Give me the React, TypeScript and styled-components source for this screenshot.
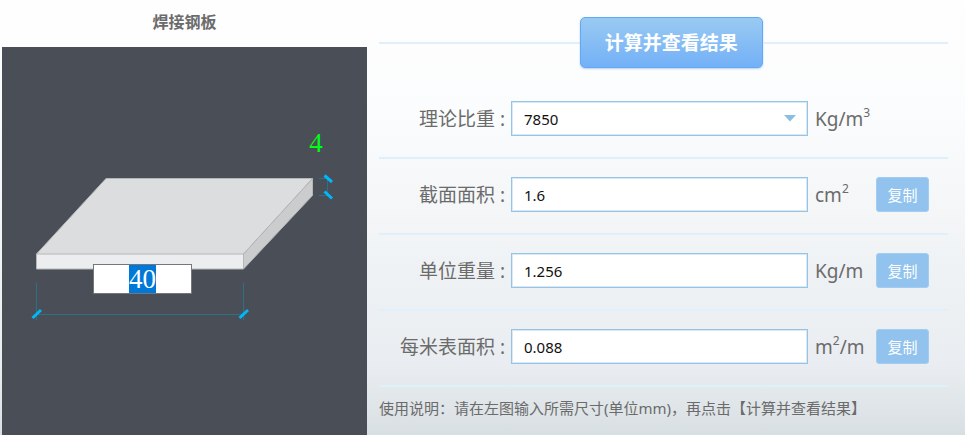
import React, { useEffect, useRef, useState } from "react";
import styled, { createGlobalStyle } from "styled-components";

const GlobalStyle = createGlobalStyle`
  *, *::before, *::after { box-sizing: border-box; }
  body {
    margin: 0;
    color: #6b6b6b;
    font-family: "Noto Sans", "Noto Sans CJK SC", sans-serif;
  }
  button, input, select { font: inherit; margin: 0; }
`;

const Page = styled.main`
  display: grid;
  grid-template-columns: minmax(0, 365fr) minmax(0, 569fr);
  column-gap: 12px;
  min-height: 100vh;
  padding: 0 17px 0 2px;
  background: linear-gradient(
    #fefefe 0%,
    #fbfcfd 25%,
    #f4f6f8 48%,
    #eff2f4 62%,
    #e9edf1 84%,
    #e3e8eb 90%,
    #d8dfe2 100%
  );
`;

const Preview = styled.section`
  display: flex;
  flex-direction: column;
`;

const Title = styled.h1`
  margin: 0;
  padding: 10px 0 13px;
  font-size: 16px;
  line-height: 24px;
  font-weight: 600;
  text-align: center;
`;

const Stage = styled.div`
  flex: 1;
  background: #4a4e57;
`;

const Drawing = styled.div`
  position: relative;

  svg {
    display: block;
    width: 100%;
    height: auto;
  }
`;

const DimensionInput = styled.input`
  position: absolute;
  padding: 0;
  border: 1px solid transparent;
  background: transparent;
  color: #00ff12;
  font-family: "Liberation Serif", "Noto Sans CJK SC", serif;
  font-size: 27px;
  line-height: 27px;
  text-align: center;
  outline: none;

  &:focus {
    background: #fff;
    border-color: #73767d;
    color: #222;
  }

  &::selection {
    background: #0078d7;
    color: #fff;
  }
`;

const WidthInput = styled(DimensionInput)`
  left: 25%;
  top: 56%;
  width: 27%;
  height: 30px;
`;

const ThicknessInput = styled(DimensionInput)`
  left: 82%;
  top: 21%;
  width: 8%;
  height: 30px;
`;

const Form = styled.form`
  display: flex;
  flex-direction: column;
`;

const Actions = styled.div`
  display: flex;
  align-items: center;
  padding: 17px 0 15px;

  &::before,
  &::after {
    content: "";
    height: 2px;
    background: #e0f0fb;
  }
  &::before { flex: 13; }
  &::after { flex: 12; }
`;

const CalculateButton = styled.button`
  height: 51px;
  padding: 0 24px;
  border: 1px solid #5fa9f7;
  border-radius: 5px;
  background: linear-gradient(#99caf2, #73b0f7);
  box-shadow: 0 1px 2px rgba(80, 140, 200, 0.4);
  color: #fff;
  font-size: 19px;
  line-height: 24px;
  font-weight: 700;
  white-space: nowrap;
  cursor: pointer;
`;

const Row = styled.div`
  display: grid;
  grid-template-columns: 126px minmax(0, 1fr) 56px 53px;
  column-gap: 6px;
  align-items: center;
  padding: 18px 19px 21px 0;
  border-bottom: 2px solid #e0f0fb;
`;

const Label = styled.label`
  font-size: 19px;
  line-height: 24px;
  text-align: right;
  white-space: nowrap;
`;

const Unit = styled.span`
  padding-left: 1px;
  font-size: 19px;
  line-height: 24px;
  white-space: nowrap;

  sup {
    font-size: 12px;
    line-height: 0;
    vertical-align: 9px;
  }
`;

const Field = styled.input`
  width: 100%;
  height: 35px;
  padding: 0 12px;
  border: 1px solid #97c4e4;
  border-radius: 0;
  background: #fff;
  box-shadow: inset 0 0 0 1px #d8e9f5;
  color: #111;
  font-size: 15px;
  appearance: none;
  outline: none;
`;

const SelectBox = styled.div`
  position: relative;

  svg {
    position: absolute;
    right: 12px;
    top: 14px;
    pointer-events: none;
  }
`;

const CopyButton = styled.button`
  height: 35px;
  padding: 0;
  border: 1px solid #a3cdf0;
  border-radius: 3px;
  background: #91c3ee;
  color: #fff;
  font-size: 15px;
  line-height: 24px;
  cursor: pointer;
`;

const Note = styled.p`
  margin: 0;
  padding: 9px 0 15px;
  font-size: 15px;
  line-height: 24px;
`;

const Plate = () => (
  <svg viewBox="2 47 365 388" aria-hidden="true">
    <polygon points="106,178.5 312.5,178.5 243.5,254 36.5,254" fill="#dcdddf" />
    <polygon points="312.5,178.5 312.5,195.5 243.5,269 243.5,254" fill="#cbccce" />
    <rect x="36.5" y="254" width="207" height="15" fill="#ecedef" />
    <path
      d="M106 178.5H312.5V195.5L243.5 269H36.5V254L106 178.5M36.5 254H243.5V269M243.5 254L312.5 178.5"
      fill="none"
      stroke="#b4b6b9"
      strokeWidth="1"
    />
    <path
      d="M36.5 283V320M243.5 283V320M36.5 314.5H243.5M319 178.5H327.5V195.5H319"
      fill="none"
      stroke="#2f7089"
      strokeWidth="1"
    />
    <path
      d="M32.5 318L41 310M239.5 318L248 310M324.5 175.5L332 182M324.5 191.5L332 198.5"
      fill="none"
      stroke="#00b7fa"
      strokeWidth="3"
    />
  </svg>
);

interface ResultRow {
  id: string;
  label: string;
  value: string;
  unit: React.ReactNode;
}

const results: ResultRow[] = [
  { id: "area", label: "截面面积", value: "1.6", unit: <>cm<sup>2</sup></> },
  { id: "weight", label: "单位重量", value: "1.256", unit: "Kg/m" },
  { id: "surface", label: "每米表面积", value: "0.088", unit: <>m<sup>2</sup>/m</> },
];

export default function App() {
  const widthRef = useRef<HTMLInputElement>(null);
  const [width, setWidth] = useState("40");
  const [thickness, setThickness] = useState("4");

  useEffect(() => {
    widthRef.current?.focus();
    widthRef.current?.select();
  }, []);

  return (
    <>
      <GlobalStyle />
      <Page>
        <Preview>
          <Title>焊接钢板</Title>
          <Stage>
            <Drawing>
              <Plate />
              <ThicknessInput
                aria-label="厚度"
                value={thickness}
                onChange={(e) => setThickness(e.target.value)}
              />
              <WidthInput
                ref={widthRef}
                aria-label="宽度"
                value={width}
                onChange={(e) => setWidth(e.target.value)}
              />
            </Drawing>
          </Stage>
        </Preview>
        <Form onSubmit={(e) => e.preventDefault()}>
          <Actions>
            <CalculateButton type="submit">计算并查看结果</CalculateButton>
          </Actions>
          <Row>
            <Label htmlFor="density">理论比重 :</Label>
            <SelectBox>
              <Field as="select" id="density" defaultValue="7850">
                <option value="7850">7850</option>
              </Field>
              <svg width="12" height="7" viewBox="0 0 12 7" aria-hidden="true">
                <path d="M0 0H12L6 6.5Z" fill="#8bbfe2" />
              </svg>
            </SelectBox>
            <Unit>Kg/m<sup>3</sup></Unit>
          </Row>
          {results.map((row) => (
            <Row key={row.id}>
              <Label htmlFor={row.id}>{row.label} :</Label>
              <Field id={row.id} readOnly value={row.value} />
              <Unit>{row.unit}</Unit>
              <CopyButton
                type="button"
                onClick={() => navigator.clipboard?.writeText(row.value)}
              >
                复制
              </CopyButton>
            </Row>
          ))}
          <Note>使用说明：请在左图输入所需尺寸(单位mm)，再点击【计算并查看结果】</Note>
        </Form>
      </Page>
    </>
  );
}
